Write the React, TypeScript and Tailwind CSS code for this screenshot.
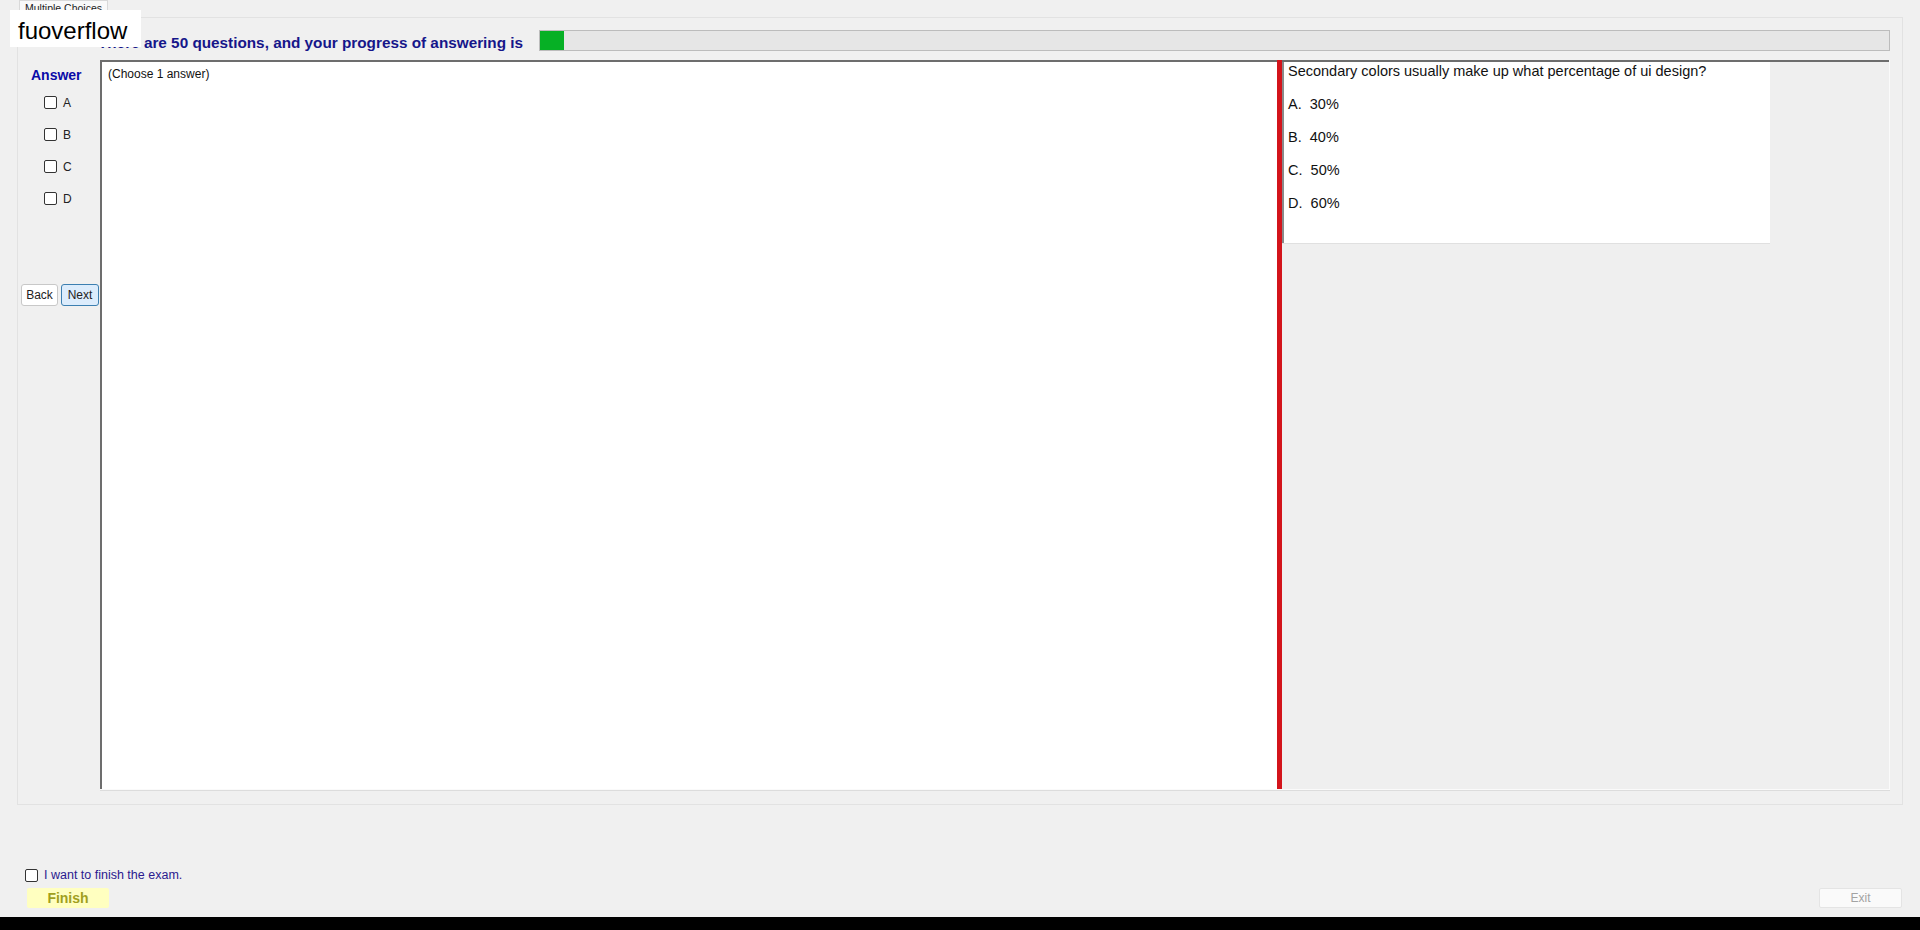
import React from 'react';

const answers = ['A', 'B', 'C', 'D'];
const options = [
    { key: 'A', text: '30%' },
    { key: 'B', text: '40%' },
    { key: 'C', text: '50%' },
    { key: 'D', text: '60%' },
];

function Box() {
    return <span className="block h-[13px] w-[13px] shrink-0 rounded-[2px] border border-[#333] bg-white" />;
}

export default function App() {
    return (
        <div className="relative flex h-[930px] w-[1920px] flex-col overflow-hidden bg-[#f0f0f0] font-['Liberation_Sans',Arial,sans-serif] text-[#111]">
            {/* tab strip */}
            <div className="flex h-[17px] shrink-0 pl-[19px]">
                <div className="h-[17px] border border-b-0 border-[#d9d9d9] bg-[#f9f9f9] px-[5px] text-[10.5px] leading-[14px] text-[#222]">
                    Multiple Choices
                </div>
            </div>

            {/* tab page */}
            <div className="ml-[17px] flex h-[788px] w-[1886px] shrink-0 flex-col border border-[#e2e2e2] bg-[#f0f0f0]">
                {/* heading + progress */}
                <div className="flex h-[42px] items-start pl-[80px] pt-[12px]">
                    <div className="mt-[2px] flex h-[23px] w-[441px] items-center whitespace-nowrap text-[15.3px] font-bold text-[#16168a]">
                        There are 50 questions, and your progress of answering is
                    </div>
                    <div className="flex h-[21px] w-[1351px] border border-[#bcbcbc] bg-[#e6e6e6]">
                        <div className="h-full w-[24px] bg-[#06b025]" />
                    </div>
                </div>

                <div className="flex">
                    {/* answer column */}
                    <div className="flex w-[82px] shrink-0 flex-col">
                        <div className="mt-[6px] pl-[13px] text-[14px] font-bold leading-[18px] text-[#0a0aa8]">Answer</div>
                        <div className="mt-[12px] flex flex-col gap-[19px] pl-[26px]">
                            {answers.map((a) => (
                                <label key={a} className="flex h-[13px] items-center gap-[6px] text-[12px] text-[#222]">
                                    <Box />
                                    {a}
                                </label>
                            ))}
                        </div>
                        <div className="mt-[79px] flex gap-[3px] pl-[3px]">
                            <button className="h-[22px] w-[37px] rounded-[3px] border border-[#c8c8c8] bg-white text-[12px] text-[#222]">
                                Back
                            </button>
                            <button className="h-[22px] w-[38px] rounded-[3px] border border-[#3c7fb1] bg-[#dcecfc] text-[12px] text-[#222]">
                                Next
                            </button>
                        </div>
                    </div>

                    {/* content panel */}
                    <div className="flex h-[730px] w-[1790px] border-b border-r border-[#fafafa] shadow-[0_1px_0_#dcdcdc]">
                        <div className="h-full w-[1177px] border-l-2 border-t-2 border-[#6d6d6d] bg-white pl-[6px] pt-[3px] text-[12px] text-[#111]">
                            (Choose 1 answer)
                        </div>
                        <div className="h-full w-[5px] bg-[#d3141b]" />
                        <div className="h-full flex-1 border-t-2 border-[#6d6d6d] bg-[#efefef]">
                            <div className="h-[181px] w-[488px] border-l-2 border-[#8a8a8a] bg-white pl-[4px] pt-0 text-[14.5px] leading-[18px] text-[#111] shadow-[0_1px_0_#e0e0e0]">
                                <div>Secondary colors usually make up what percentage of ui design?</div>
                                {options.map((o) => (
                                    <div key={o.key} className="mt-[15px]">
                                        {o.key}.&nbsp;&nbsp;{o.text}
                                    </div>
                                ))}
                            </div>
                        </div>
                    </div>
                </div>
            </div>

            {/* bottom */}
            <div className="flex flex-1 flex-col justify-end pb-[9px]">
                <label className="flex h-[14px] items-center gap-[6px] pl-[25px] text-[12.5px] text-[#2b1a8f]">
                    <Box />
                    I want to finish the exam.
                </label>
                <div className="mt-[6px] flex items-center justify-between pl-[27px] pr-[18px]">
                    <button className="h-[20px] w-[82px] rounded-[2px] bg-[#ffffc0] text-[14px] font-bold text-[#a0a01e]">
                        Finish
                    </button>
                    <button className="h-[20px] w-[83px] rounded-[2px] border border-[#e4e4e4] bg-[#fafafa] text-[12px] text-[#a3a3a3]">
                        Exit
                    </button>
                </div>
            </div>
            <div className="h-[13px] shrink-0 bg-black" />

            {/* watermark overlay */}
            <div className="absolute left-[10px] top-[10px] flex h-[37px] w-[131px] items-center bg-white pl-[8px] pt-[4px] text-[24px] text-black">
                fuoverflow
            </div>
        </div>
    );
}
